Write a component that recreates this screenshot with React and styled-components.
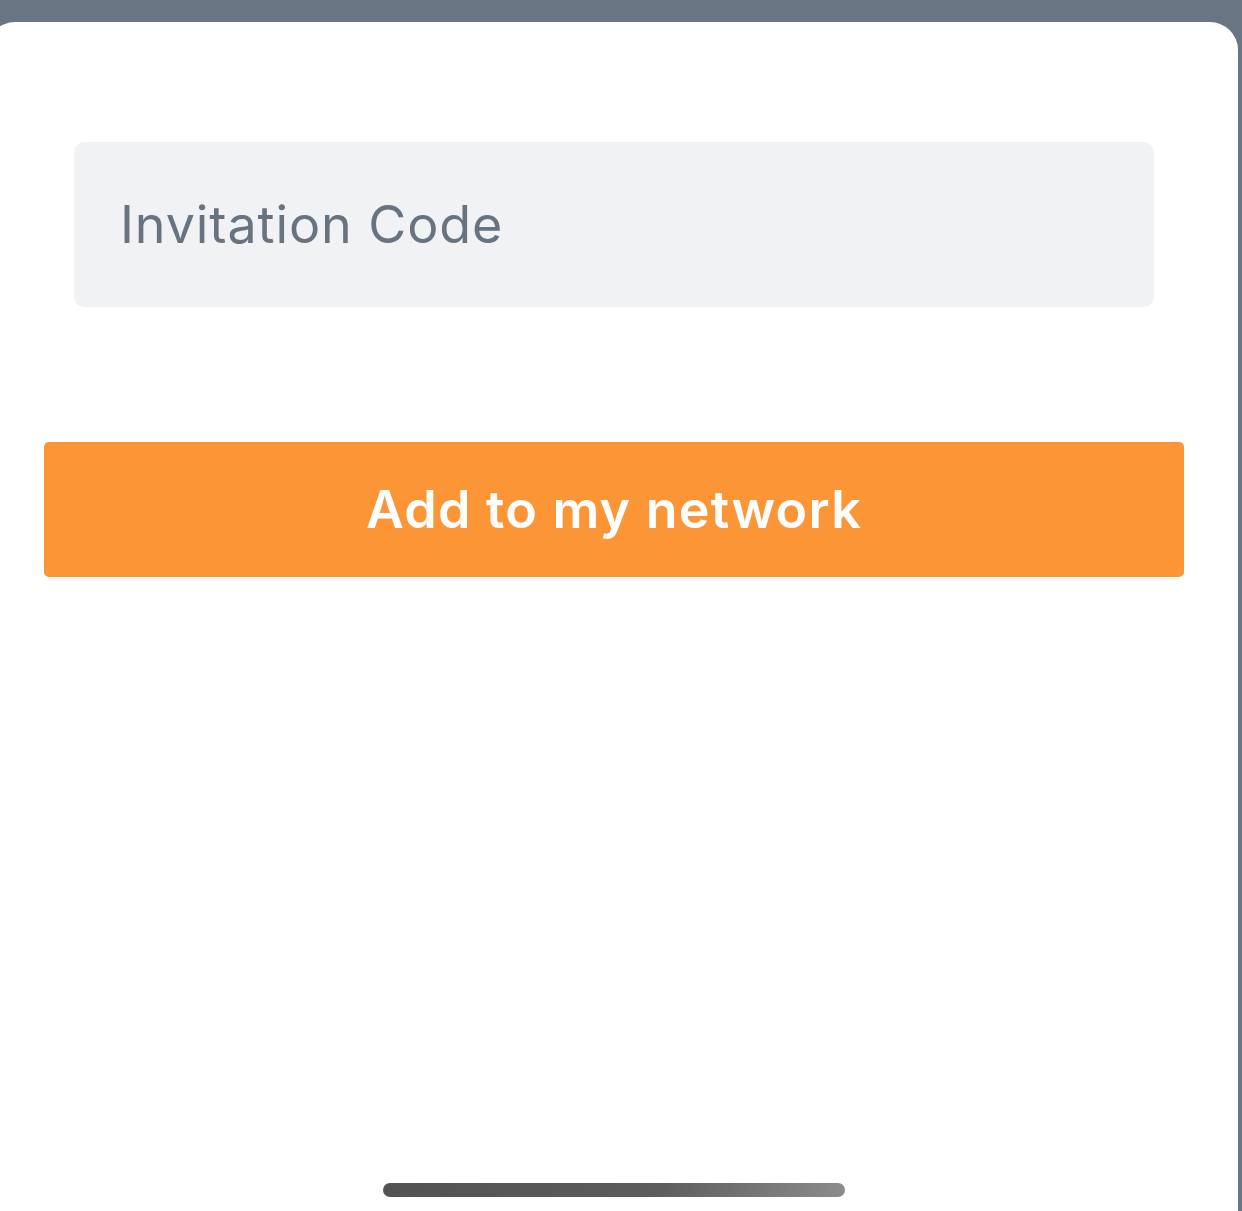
import React from 'react';
import styled, { createGlobalStyle } from 'styled-components';

const GlobalStyle = createGlobalStyle`
  html, body {
    margin: 0;
    padding: 0;
    background: #687582;
  }
  body {
    font-family: Inter, "Noto Sans", "Liberation Sans", sans-serif;
  }
`;

const Screen = styled.div`
  width: 1242px;
  height: 1211px;
  padding-top: 22px;
  box-sizing: border-box;
  overflow: hidden;
  background: #687582;
`;

const Sheet = styled.div`
  margin-left: -13px;
  width: 1251px;
  height: 1189px;
  background: #ffffff;
  border-radius: 28px 28px 0 0;
  display: flex;
  flex-direction: column;
  padding-top: 120px;
  padding-left: 13px;
  box-sizing: border-box;
`;

const Field = styled.div`
  margin: 0 84px 0 74px;
  height: 165px;
  border-radius: 10px;
  background: #f1f2f4;
  display: flex;
  align-items: center;
  padding-left: 46px;
  font-size: 52px;
  letter-spacing: 0.9px;
  color: #67737e;
`;

const Button = styled.button`
  margin: 135px 54px 0 44px;
  height: 135px;
  border: none;
  border-radius: 5px;
  background: #fb9535;
  color: #ffffff;
  font-family: inherit;
  font-size: 52px;
  font-weight: 600;
  letter-spacing: 1.25px;
  cursor: pointer;
`;

const Spacer = styled.div`
  flex: 1;
`;

const HomeIndicator = styled.div`
  align-self: flex-start;
  margin: 0 0 14px 383px;
  width: 462px;
  height: 14px;
  border-radius: 7px;
  background: linear-gradient(100deg, #525252 0%, #5d5d5d 60%, #8c8c8c 100%);
`;

export default function App() {
  return (
    <>
      <GlobalStyle />
      <Screen>
        <Sheet>
          <Field>Invitation Code</Field>
          <Button>Add to my network</Button>
          <Spacer />
          <HomeIndicator />
        </Sheet>
      </Screen>
    </>
  );
}
